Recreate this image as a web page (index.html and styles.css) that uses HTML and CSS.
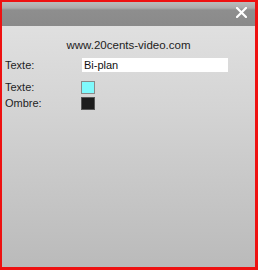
FILE: index.html
```html
<!DOCTYPE html>
<html>
<head>
<meta charset="utf-8">
<link rel="stylesheet" href="styles.css">
</head>
<body>
<div class="frame">
  <div class="titlebar">
    <svg class="close" width="11" height="11" viewBox="0 0 11 11"><path d="M1 1L10 10M10 1L1 10" stroke="#fff" stroke-width="2.2" stroke-linecap="square"/></svg>
  </div>
  <div class="content">
    <div class="url">www.20cents-video.com</div>
    <div class="row row-input">
      <span class="label">Texte:</span>
      <div class="field">Bi-plan</div>
    </div>
    <div class="row">
      <span class="label">Texte:</span>
      <span class="swatch cyan"></span>
    </div>
    <div class="row">
      <span class="label">Ombre:</span>
      <span class="swatch black"></span>
    </div>
  </div>
</div>
</body>
</html>
```

FILE: styles.css
```css
html, body {
  margin: 0;
  padding: 0;
}
body {
  font-family: "Liberation Sans", Arial, sans-serif;
  color: #1e1e1e;
}
.frame {
  width: 258px;
  height: 270px;
  box-sizing: border-box;
  border-style: solid;
  border-color: #ee1111;
  border-width: 2px 3px 3px 2px;
  display: flex;
  flex-direction: column;
  background: linear-gradient(to bottom, #e3e3e3 0%, #d4d4d4 40%, #bababa 100%);
}
.titlebar {
  height: 24px;
  flex: none;
  display: flex;
  justify-content: flex-end;
  align-items: flex-start;
  padding-right: 8px;
  background: linear-gradient(to bottom, #bcbcbc 0px, #aaaaaa 6px, #8e8e8e 8px, #8a8a8a 24px);
}
.close {
  margin-top: 5px;
}
.content {
  flex: 1;
  padding: 12px 0 0 3px;
}
.url {
  font-size: 11.5px;
  line-height: 14px;
  text-align: center;
  margin-left: -3px;
  color: #222;
}
.row {
  display: flex;
  align-items: center;
  height: 16px;
  font-size: 11px;
}
.row-input {
  height: 18px;
  margin-top: 4px;
  margin-bottom: 5px;
}
.label {
  width: 77px;
  flex: none;
}
.field {
  width: 146px;
  height: 14px;
  box-sizing: border-box;
  background: #ffffff;
  padding-left: 2px;
  line-height: 14px;
  font-size: 11px;
  color: #111;
}
.swatch {
  width: 14px;
  height: 13px;
  box-sizing: border-box;
  margin-left: -1px;
  border: 1px solid #8a8a8a;
}
.cyan {
  background: #7ff9fc;
}
.black {
  background: #1c1c1c;
  border-color: #555;
}
```
